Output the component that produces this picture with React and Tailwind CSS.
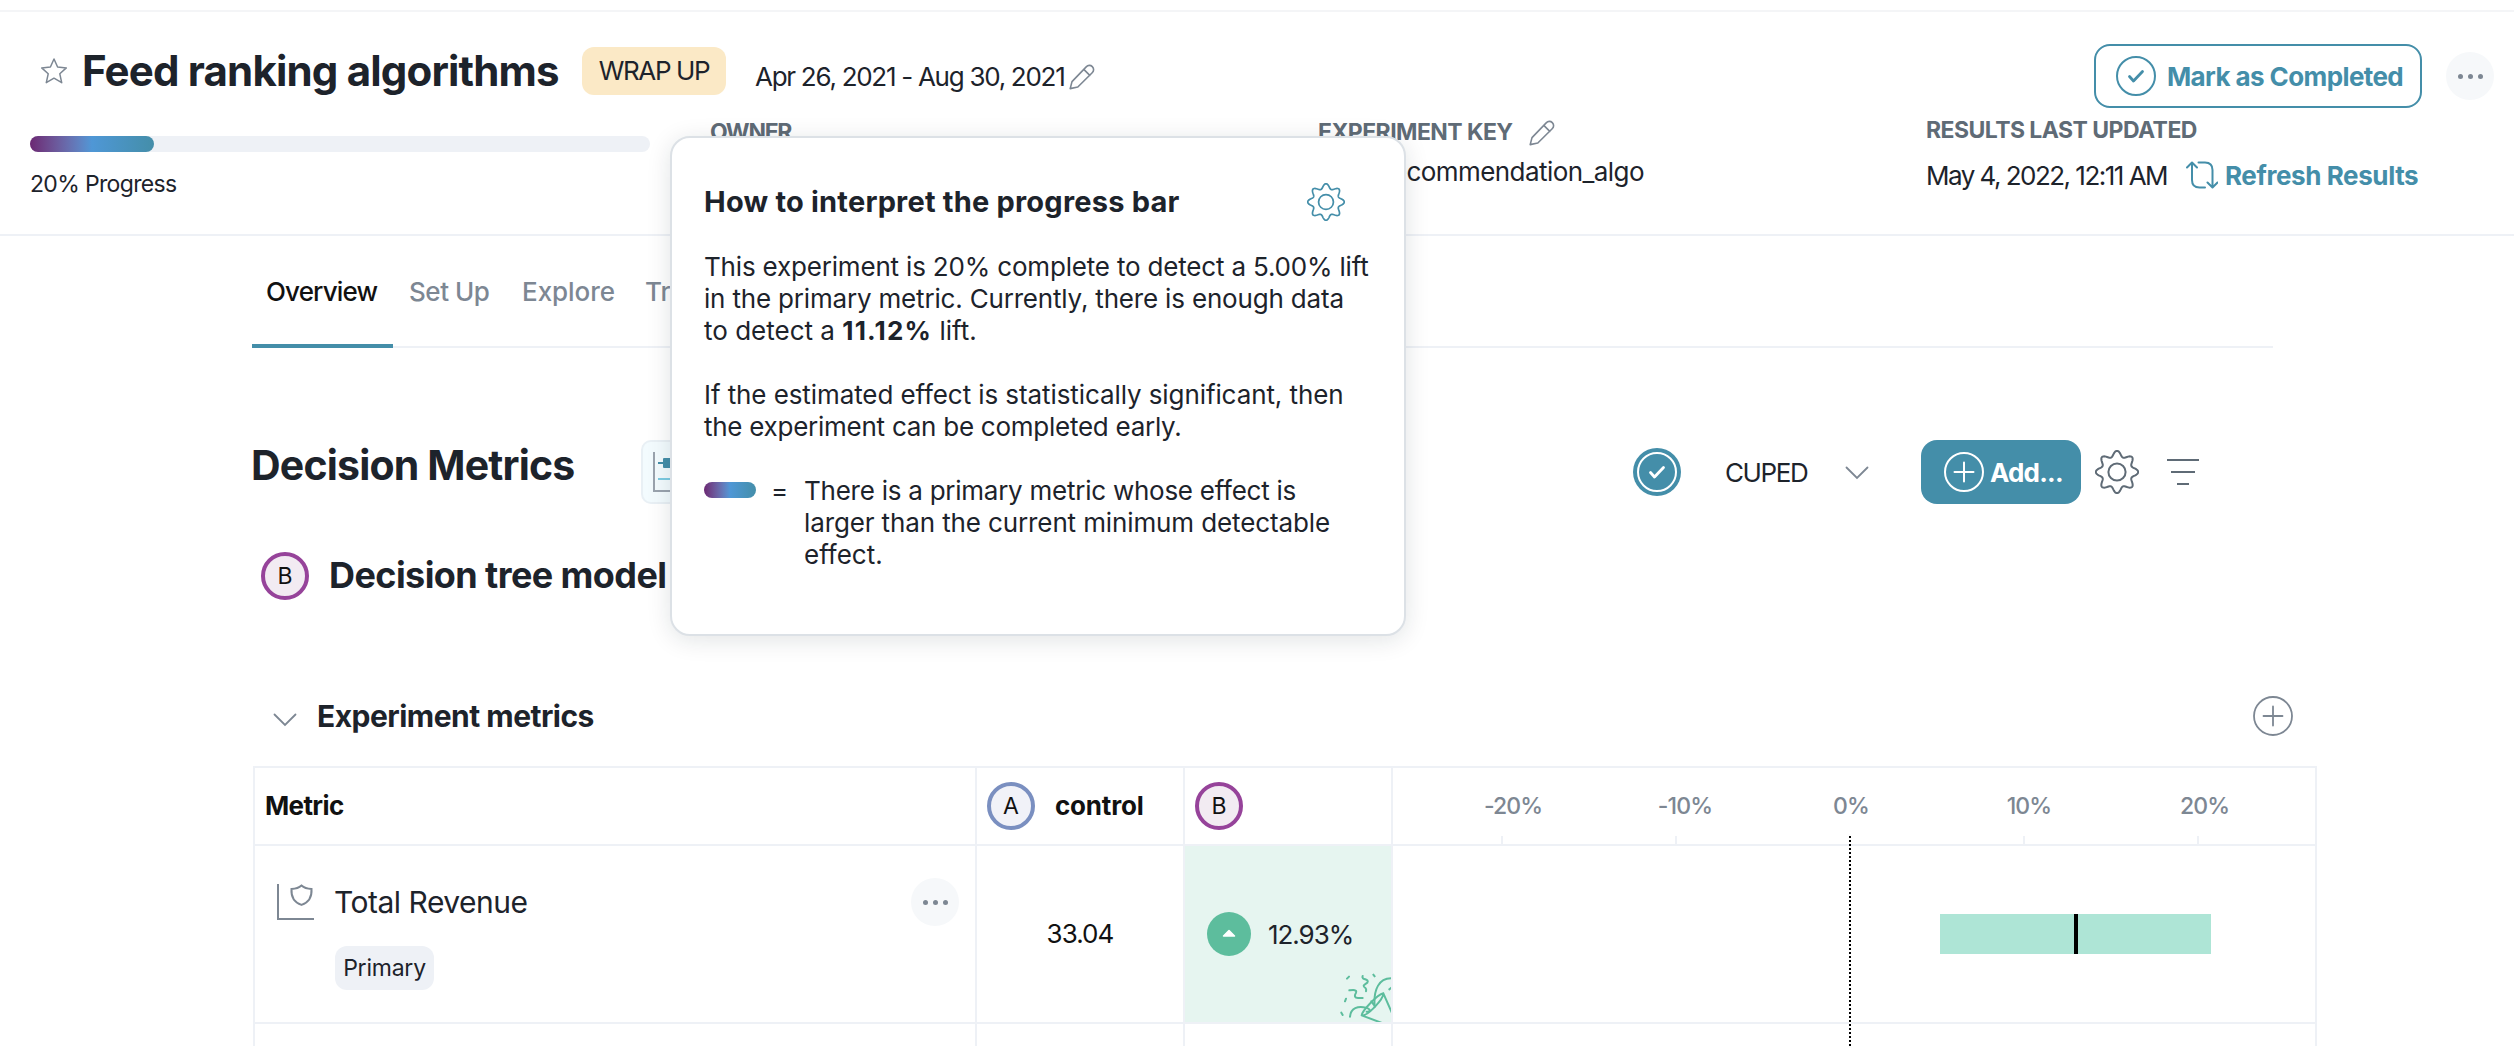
import React from "react";

const LOBES = 8;

function gearPath() {
  const steps = 192;
  const points = [];
  for (let i = 0; i < steps; i++) {
    const a = (i / steps) * Math.PI * 2;
    const k = Math.pow((1 + Math.cos(LOBES * a)) / 2, 1.15);
    const r = 15.6 + 5.6 * k;
    points.push(`${(22 + r * Math.sin(a)).toFixed(2)} ${(22 - r * Math.cos(a)).toFixed(2)}`);
  }
  return `M${points.join("L")}Z`;
}

const GEAR = gearPath();

function Gear({ className, width }) {
  return (
    <svg viewBox="0 0 44 44" className={className} fill="none" stroke="currentColor" strokeWidth={width} strokeLinejoin="round">
      <path d={GEAR} />
      <circle cx="22" cy="22" r="8.6" />
    </svg>
  );
}

function Pencil({ className }) {
  return (
    <svg viewBox="0 0 26 26" className={className} fill="none" stroke="#7d8793" strokeWidth="1.6" strokeLinejoin="round" strokeLinecap="round">
      <path d="M1.2 24.6 3 17.6 17.2 2.9C19 1 21.5 .8 23.3 2.6c1.800 1.800 1.700 4.300-.1 6.100L8.800 23 1.200 24.600ZM14.800 5.400l6 6" />
    </svg>
  );
}

function Chevron({ className }) {
  return (
    <svg viewBox="0 0 24 14" className={className} fill="none" stroke="#7d8793" strokeWidth="1.8" strokeLinecap="round">
      <path d="m1.500 1.500 10.500 10.500L22.500 1.500" />
    </svg>
  );
}

function PlusCircle({ className, width = 2 }) {
  return (
    <svg viewBox="0 0 40 40" className={className} fill="none" stroke="currentColor" strokeWidth={width}>
      <circle cx="20" cy="20" r="19" />
      <path d="M20 10.500v19M10.500 20h19" strokeLinecap="round" />
    </svg>
  );
}

function CheckCircle({ className }) {
  return (
    <svg viewBox="0 0 40 40" className={className} fill="none" stroke="currentColor" strokeLinecap="round" strokeLinejoin="round">
      <circle cx="20" cy="20" r="19" strokeWidth="2" />
      <path d="m13.500 20.500 4 4.500L26.500 15.500" strokeWidth="2.800" />
    </svg>
  );
}

function Refresh({ className }) {
  return (
    <svg viewBox="0 0 32 28" className={className} fill="none" stroke="currentColor" strokeWidth="2" strokeLinecap="round" strokeLinejoin="round">
      <path d="M6 1.500V19c0 5 2.500 7.500 7.500 7.500h5.500M1 6.500l5-5 5 5" />
      <path d="M12.500 1.500H19c5 0 7.500 2.500 7.500 7.500v17M21.500 21.500l5 5 5-5" />
    </svg>
  );
}

function Dots({ className }) {
  return (
    <div className={`flex h-12 w-12 shrink-0 items-center justify-center gap-[5px] rounded-full bg-[#f6f8fa] ${className}`}>
      <span className="size-[5px] rounded-full bg-[#7d8793]" />
      <span className="size-[5px] rounded-full bg-[#7d8793]" />
      <span className="size-[5px] rounded-full bg-[#7d8793]" />
    </div>
  );
}

function Badge({ letter, className }) {
  return (
    <div className={`flex h-12 w-12 shrink-0 items-center justify-center rounded-full border-4 text-[23px] leading-none text-[#111] ${className}`}>
      {letter}
    </div>
  );
}

function Confetti() {
  return (
    <svg viewBox="30 30 153 150" className="absolute right-0 bottom-0 h-[50px] w-[51px]" fill="none" stroke="#5dbd9d" strokeWidth="6" strokeLinecap="round" strokeLinejoin="round">
      <path d="M160 94C142 98 97 145 95 160C111 164 161 112 160 94ZM160 94L188 158M95 160L156 183" />
      <path d="M60 164C62 138 84 131 108 137C124 142 122 150 110 149M134 134C130 84 146 46 188 49M124 118L134 132" />
      <path d="M98 42C92 54 120 50 112 62C98 72 98 72 107 79C110 82 108 85 108 88" />
      <path d="M58 85C68 84 82 82 78 92C72 102 74 108 84 108L98 108" />
      <path d="M57 44L51 50M130 38L134 43M48 110L45 118M34 152L38 159M178 82L186 76" />
    </svg>
  );
}

function Header() {
  return (
    <header className="mt-[10px] h-[226px] border-t-2 border-b-2 border-t-[#f4f5f7] border-b-[#eef1f6]">
      <div className="flex h-[106px] items-start pt-8 pr-5">
        <svg viewBox="0 0 26 26" className="mt-[13px] ml-[41px] h-[28px] w-[26px] fill-none stroke-[#7d8793] stroke-[1.500]" strokeLinejoin="round">
          <path d="m13 1 3.600 8 8.700.900-6.500 5.900 1.900 8.900L13 20.200l-7.700 4.500 1.900-8.900L.7 9.900 9.400 9Z" />
        </svg>
        <h1 className="mt-[3px] ml-[15px] w-[498px] text-[42px] leading-[48px] font-bold tracking-[-0.820px]">Feed ranking algorithms</h1>
        <div className="mt-[3px] ml-[2px] h-12 w-[144px] rounded-[12px] bg-[#fbe9c6] text-center text-[26px] leading-[48px] tracking-[-1.400px]">WRAP UP</div>
        <div className="mt-[9px] ml-[29px] w-[314px] text-[26px] leading-[48px] tracking-[-1.280px]">Apr 26, 2021 - Aug 30, 2021</div>
        <Pencil className="mt-[20px] size-[26px]" />
        <button className="ml-auto flex h-16 w-[328px] items-center rounded-[16px] border-2 border-[#448ea9] pl-5 text-[#448ea9]">
          <CheckCircle className="size-10" />
          <span className="ml-[11px] text-[26px] font-bold tracking-[-0.600px]">Mark as Completed</span>
        </button>
        <Dots className="mt-2 ml-6" />
      </div>
      <div className="flex pl-[30px]">
        <div className="w-[680px] pt-[18px]">
          <div className="h-4 w-[620px] rounded-full bg-[#eef1f6]">
            <div className="h-4 w-[20%] rounded-full bg-linear-to-r from-[#6b2773] via-[#4f97d6] to-[#448ea9]" />
          </div>
          <div className="mt-4 text-[23px] leading-8 tracking-[-0.660px]">20% Progress</div>
        </div>
        <div className="w-[608px] pt-[2px]">
          <div className="text-[23px] leading-[25px] font-bold tracking-[-1.300px] text-[#5f6b76]">OWNER</div>
        </div>
        <div className="w-[608px] pt-[2px]">
          <div className="flex h-[25px] items-center text-[23px] font-bold tracking-[-0.560px] text-[#5f6b76]">
            <span className="w-[211px]">EXPERIMENT KEY</span>
            <Pencil className="size-[26px]" />
          </div>
          <div className="mt-[11px] text-[26px] leading-8 tracking-[-0.560px]">feed_recommendation_algo</div>
        </div>
        <div>
          <div className="text-[23px] leading-6 font-bold tracking-[-0.550px] text-[#5f6b76]">RESULTS LAST UPDATED</div>
          <div className="mt-[17px] flex h-8 items-center text-[26px]">
            <span className="w-[260px] tracking-[-1.520px]">May 4, 2022, 12:11 AM</span>
            <Refresh className="h-[28px] w-8 text-[#448ea9]" />
            <span className="ml-[7px] font-bold tracking-[-0.400px] text-[#448ea9]">Refresh Results</span>
          </div>
        </div>
      </div>
    </header>
  );
}

function Tabs() {
  return (
    <nav className="ml-[252px] flex h-28 w-[2021px] border-b-2 border-[#eef1f6] text-[26px] leading-[112px] font-medium text-[#7d8793]">
      <div className="-mb-[2px] h-28 w-[141px] border-b-4 border-[#448ea9] pl-[14px] tracking-[-0.850px] text-[#111]">Overview</div>
      <div className="w-[114px] pl-[16px] tracking-[-0.450px]">Set Up</div>
      <div className="w-[114px] pl-[15px] tracking-[-0.050px]">Explore</div>
      <div className="h-[108px] w-[56px] overflow-hidden pl-[24px]">Tracking</div>
    </nav>
  );
}

function ProgressPopover() {
  return (
    <div className="absolute top-[136px] left-[670px] h-[500px] w-[736px] rounded-[20px] border-2 border-[#dce1e6] bg-white pt-[46px] pl-[32px] text-[26px] leading-8 shadow-[0_4px_24px_rgba(20,30,40,0.120)]">
      <div className="flex h-9 items-center">
        <h2 className="w-[603px] text-[29px] font-bold tracking-[0.210px]">How to interpret the progress bar</h2>
        <Gear className="size-[38px] text-[#448ea9]" width={2} />
      </div>
      <p className="mt-[31px]">
        <span className="tracking-[-0.180px]">This experiment is 20% complete to detect a 5.00% lift</span>
        <br />
        <span className="tracking-[-0.180px]">in the primary metric. Currently, there is enough data</span>
        <br />
        to detect a <b className="font-bold tracking-[1.200px]">11.12%</b> lift.
      </p>
      <p className="mt-8">
        <span className="tracking-[-0.090px]">If the estimated effect is statistically significant, then</span>
        <br />
        <span className="tracking-[-0.260px]">the experiment can be completed early.</span>
      </p>
      <div className="mt-8 flex">
        <div className="mt-[7px] h-4 w-[52px] rounded-full bg-linear-to-r from-[#6b2773] via-[#4f97d6] to-[#448ea9]" />
        <span className="ml-[15px] w-[33px]">=</span>
        <p>
          <span className="tracking-[-0.250px]">There is a primary metric whose effect is</span>
          <br />
          <span className="tracking-[-0.120px]">larger than the current minimum detectable</span>
          <br />
          effect.
        </p>
      </div>
    </div>
  );
}

function DecisionHeader() {
  return (
    <div className="mt-[92px] ml-[251px] flex h-16">
      <h2 className="w-[390px] text-[41px] leading-[50px] font-bold tracking-[-0.820px]">Decision Metrics</h2>
      <div className="h-16 w-[64px] rounded-[10px] border-2 border-[#e9f0f5] bg-[#f3fbfe]">
        <svg viewBox="0 0 60 60" className="size-[60px]" fill="none">
          <path d="M11 10v39h40" stroke="#9aa3ae" strokeWidth="2" />
          <path d="M15 21h36" stroke="#448ea9" strokeWidth="2" />
          <rect x="20" y="16" width="20" height="10" rx="1" fill="#448ea9" />
          <path d="M15 37h36" stroke="#7ccbe2" strokeWidth="2" />
        </svg>
      </div>
      <div className="ml-[928px] flex h-16 items-center">
        <div className="flex size-12 items-center justify-center rounded-full bg-[#448ea9] text-white">
          <CheckCircle className="size-10" />
        </div>
        <span className="ml-[44px] w-[120px] text-[26px] tracking-[-1.390px]">CUPED</span>
        <Chevron className="mt-[2px] h-[14px] w-6" />
        <button className="ml-[52px] flex h-16 w-[160px] items-center rounded-[16px] bg-[#448ea9] pl-[23px] text-white">
          <PlusCircle className="size-10" />
          <span className="ml-[6px] text-[26px] font-bold tracking-[-0.790px]">Add...</span>
        </button>
        <Gear className="ml-[14px] size-[44px] text-[#5f6b76]" width={2} />
        <svg viewBox="0 0 32 28" className="ml-[28px] h-7 w-8" stroke="#5f6b76" strokeWidth="2">
          <path d="M0 2h32M4 14h24M10 26h12" />
        </svg>
      </div>
    </div>
  );
}

const TICKS = [
  ["-20%", "pl-[22px]"],
  ["-10%", "pl-[18px]"],
  ["0%", "pl-[2px]"],
  ["10%", "pl-[10px]"],
  ["20%", "pl-[13px]"],
];

function MetricsTable() {
  return (
    <div className="relative mt-[30px] ml-[253px] w-[2064px] border-2 border-[#eef1f6]">
      <div className="flex h-[78px] items-center border-b-2 border-[#eef1f6]">
        <div className="h-full w-[722px] border-r-2 border-[#eef1f6] pl-[10px] text-[26px] leading-[76px] font-bold tracking-[-0.620px] text-[#111]">Metric</div>
        <div className="flex h-full w-[208px] items-center border-r-2 border-[#eef1f6] pl-[10px]">
          <Badge letter="A" className="border-[#7a8fc0] bg-[#f1f2f8]" />
          <span className="-mt-[2px] ml-[20px] text-[26px] font-bold tracking-[-0.200px] text-[#111]">control</span>
        </div>
        <div className="flex h-full w-[208px] items-center border-r-2 border-[#eef1f6] pl-[10px]">
          <Badge letter="B" className="border-[#96439a] bg-[#f2ebf2]" />
        </div>
        <div className="flex h-full pl-[22px]">
          {TICKS.map(([label, shift]) => (
            <div key={label} className="flex w-[174px] flex-col items-center justify-between">
              <span className={`mt-[26px] text-[23px] leading-6 font-medium tracking-[-0.900px] text-[#7d8793] ${shift}`}>{label}</span>
              <span className="h-2 w-[2px] bg-[#eef1f6]" />
            </div>
          ))}
        </div>
      </div>
      <div className="flex h-[178px] border-b-2 border-[#eef1f6]">
        <div className="flex h-full w-[722px] border-r-2 border-[#eef1f6] pt-8 pl-[22px]">
          <svg viewBox="0 0 38 38" className="mt-[5px] size-[38px]" fill="none" stroke="#7d8793" strokeWidth="2">
            <path d="M1 1v35h36" />
            <path d="M24.500 2.500c2.500 2.300 6 3.300 10 3.400.500 7.500-2.500 13.500-10 16-7.500-2.500-10.500-8.500-10-16 4-.1 7.500-1.100 10-3.400Z" />
          </svg>
          <div className="ml-[20px]">
            <div className="-ml-px text-[30px] leading-[48px] tracking-[-0.500px]">Total Revenue</div>
            <div className="mt-5 h-11 w-[99px] rounded-[12px] bg-[#eef1f6] text-center text-[23px] leading-[44px] tracking-[-0.230px]">Primary</div>
          </div>
          <Dots className="mr-4 ml-auto" />
        </div>
        <div className="h-full w-[208px] border-r-2 border-[#eef1f6] text-center text-[26px] leading-[176px] tracking-[-0.940px] text-[#111]">33.04</div>
        <div className="relative flex h-full w-[208px] items-center border-r-2 border-[#eef1f6] bg-[#e6f5f0] bg-clip-padding pl-[22px]">
          <svg viewBox="0 0 44 44" className="size-11">
            <circle cx="22" cy="22" r="22" fill="#5dbd9d" />
            <path d="m22 18.500 5.500 5.500H16.500Z" fill="#fff" stroke="#fff" strokeWidth="1.500" strokeLinejoin="round" />
          </svg>
          <span className="ml-[17px] text-[26px] tracking-[-1.050px]">12.93%</span>
          <Confetti />
        </div>
        <div className="flex h-full items-center pl-[547px]">
          <div className="flex h-10 w-[271px] justify-center bg-[#aee5d6]">
            <div className="h-10 w-1 bg-black" />
          </div>
        </div>
      </div>
      <div className="flex h-[60px]">
        <div className="w-[722px] border-r-2 border-[#eef1f6]" />
        <div className="w-[208px] border-r-2 border-[#eef1f6]" />
        <div className="w-[208px] border-r-2 border-[#eef1f6]" />
      </div>
      <div className="absolute top-[68px] left-[1594px] h-[260px] w-[2px] bg-[repeating-linear-gradient(to_bottom,#000_0px,#000_2px,#fff_2px,#fff_4px)]" />
    </div>
  );
}

export default function App() {
  return (
    <div className="relative flow-root h-[1046px] w-[2514px] overflow-hidden bg-white font-['Inter',sans-serif] whitespace-nowrap text-[#1d232b]">
      <Header />
      <Tabs />
      <DecisionHeader />
      <div className="mt-12 ml-[261px] flex h-12 items-center">
        <Badge letter="B" className="border-[#96439a] bg-[#f2ebf2]" />
        <h3 className="-mt-[2px] ml-[20px] text-[36px] leading-none font-bold tracking-[-0.580px]">Decision tree model</h3>
      </div>
      <div className="mt-24 ml-[273px] flex h-10 w-[2020px] items-center">
        <Chevron className="mt-2 h-[14px] w-6" />
        <h4 className="ml-[20px] text-[30px] leading-none font-bold tracking-[-0.520px]">Experiment metrics</h4>
        <PlusCircle className="ml-auto size-10 text-[#7d8793]" width={1.8} />
      </div>
      <MetricsTable />
      <ProgressPopover />
    </div>
  );
}
